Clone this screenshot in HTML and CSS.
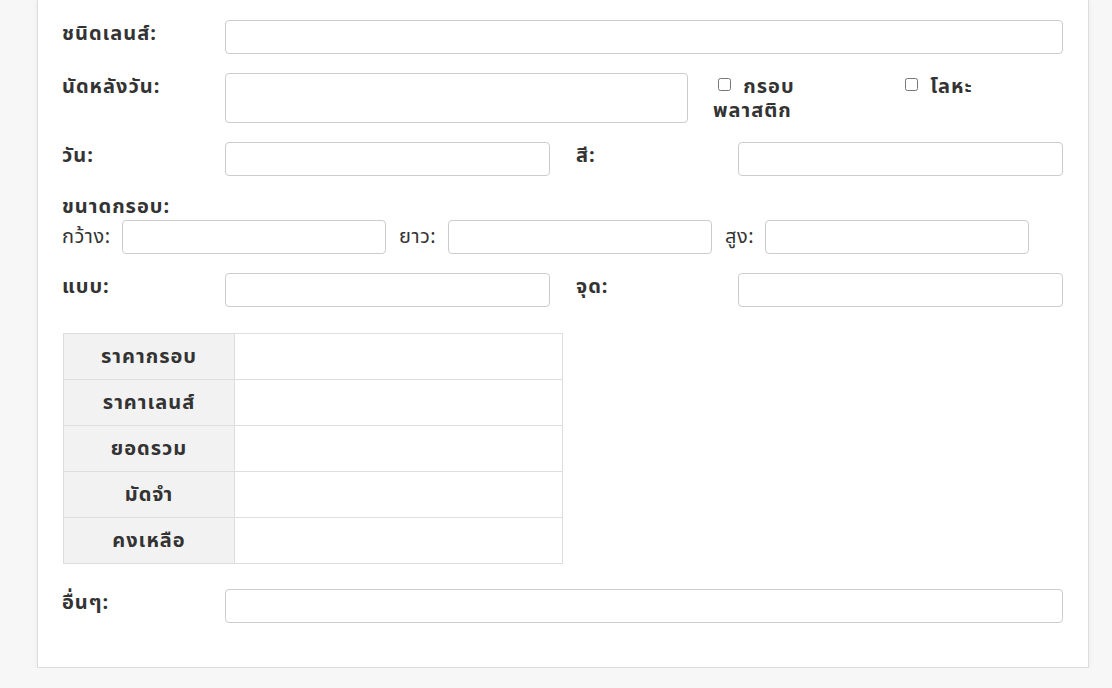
FILE: index.html
```html
<!DOCTYPE html>
<html lang="th">
<head>
<meta charset="utf-8">
<link rel="stylesheet" href="styles.css">
</head>
<body>
<div class="card">
  <div class="row">
    <label class="lbl">ชนิดเลนส์:</label>
    <input class="ctl wide" type="text">
  </div>
  <div class="row">
    <label class="lbl">นัดหลังวัน:</label>
    <textarea class="ctl area"></textarea>
    <label class="chk chk1"><input type="checkbox"> กรอบ พลาสติก</label>
    <label class="chk chk2"><input type="checkbox"> โลหะ</label>
  </div>
  <div class="row">
    <label class="lbl">วัน:</label>
    <input class="ctl half" type="text">
    <label class="lbl lbl2">สี:</label>
    <input class="ctl half" type="text">
  </div>
  <div class="size">
    <div class="size-title">ขนาดกรอบ:</div>
    <div class="size-row">
      <span class="sl sl-w">กว้าง:</span><input class="ctl dim" type="text">
      <span class="sl sl-l">ยาว:</span><input class="ctl dim" type="text">
      <span class="sl sl-h">สูง:</span><input class="ctl dim" type="text">
    </div>
  </div>
  <div class="row">
    <label class="lbl">แบบ:</label>
    <input class="ctl half" type="text">
    <label class="lbl lbl2">จุด:</label>
    <input class="ctl half" type="text">
  </div>
  <table class="price">
    <tr><th>ราคากรอบ</th><td></td></tr>
    <tr><th>ราคาเลนส์</th><td></td></tr>
    <tr><th>ยอดรวม</th><td></td></tr>
    <tr><th>มัดจำ</th><td></td></tr>
    <tr><th>คงเหลือ</th><td></td></tr>
  </table>
  <div class="row last">
    <label class="lbl">อื่นๆ:</label>
    <input class="ctl wide" type="text">
  </div>
</div>
</body>
</html>
```

FILE: styles.css
```css
html, body {
  margin: 0;
  padding: 0;
  background: #f7f7f7;
  font-family: "Noto Sans Thai", Tahoma, "Noto Sans", "DejaVu Sans", sans-serif;
  color: #333;
  font-size: 20px;
}
.card {
  margin-left: 37px;
  width: 1052px;
  height: 668px;
  box-sizing: border-box;
  background: #fff;
  border: 1px solid #ddd;
  border-top: none;
  box-shadow: 0 1px 6px rgba(0,0,0,0.06);
  padding: 20px 25px 44px 24px;
}
.row {
  display: flex;
  align-items: flex-start;
  margin-bottom: 19px;
}
.lbl {
  width: 163px;
  flex: none;
  font-weight: bold;
  letter-spacing: 1px;
  padding-top: 1px;
  line-height: 26px;
}
.lbl2 {
  margin-left: 26px;
  width: 162px;
}
.ctl {
  box-sizing: border-box;
  height: 34px;
  border: 1px solid #ccc;
  border-radius: 4px;
  background: #fff;
  font: inherit;
  margin: 0;
  padding: 6px 12px;
  flex: none;
}
.wide { width: 838px; }
.half { width: 325px; }
.area {
  width: 463px;
  height: 50px;
  resize: none;
}
.chk {
  font-weight: bold;
  letter-spacing: 1px;
  line-height: 24px;
  flex: none;
  padding-top: 2px;
}
.chk input {
  margin: 0 6px 0 5px;
  width: 13px;
  height: 13px;
  vertical-align: 2px;
}
.chk1 { margin-left: 25px; width: 150px; }
.chk2 { margin-left: 37px; }
.size { margin-bottom: 19px; }
.size-title {
  font-weight: bold;
  letter-spacing: 1px;
  line-height: 25px;
  height: 25px;
}
.size-row {
  display: flex;
  align-items: center;
}
.sl {
  flex: none;
  letter-spacing: 0.5px;
  line-height: 34px;
}
.sl-w { width: 60px; }
.sl-l { width: 49px; margin-left: 13px; }
.sl-h { width: 40px; margin-left: 13px; }
.dim { width: 264px; }
.price {
  border-collapse: collapse;
  margin-top: 26px;
  margin-bottom: 25px;
  margin-left: 1px;
}
.price th, .price td {
  border: 1px solid #ddd;
  height: 46px;
  padding: 0;
  box-sizing: border-box;
}
.price th {
  width: 171px;
  background: #f2f2f2;
  font-weight: bold;
  letter-spacing: 1px;
  text-align: center;
}
.price td { width: 328px; }
.last { margin-bottom: 0; }
```
